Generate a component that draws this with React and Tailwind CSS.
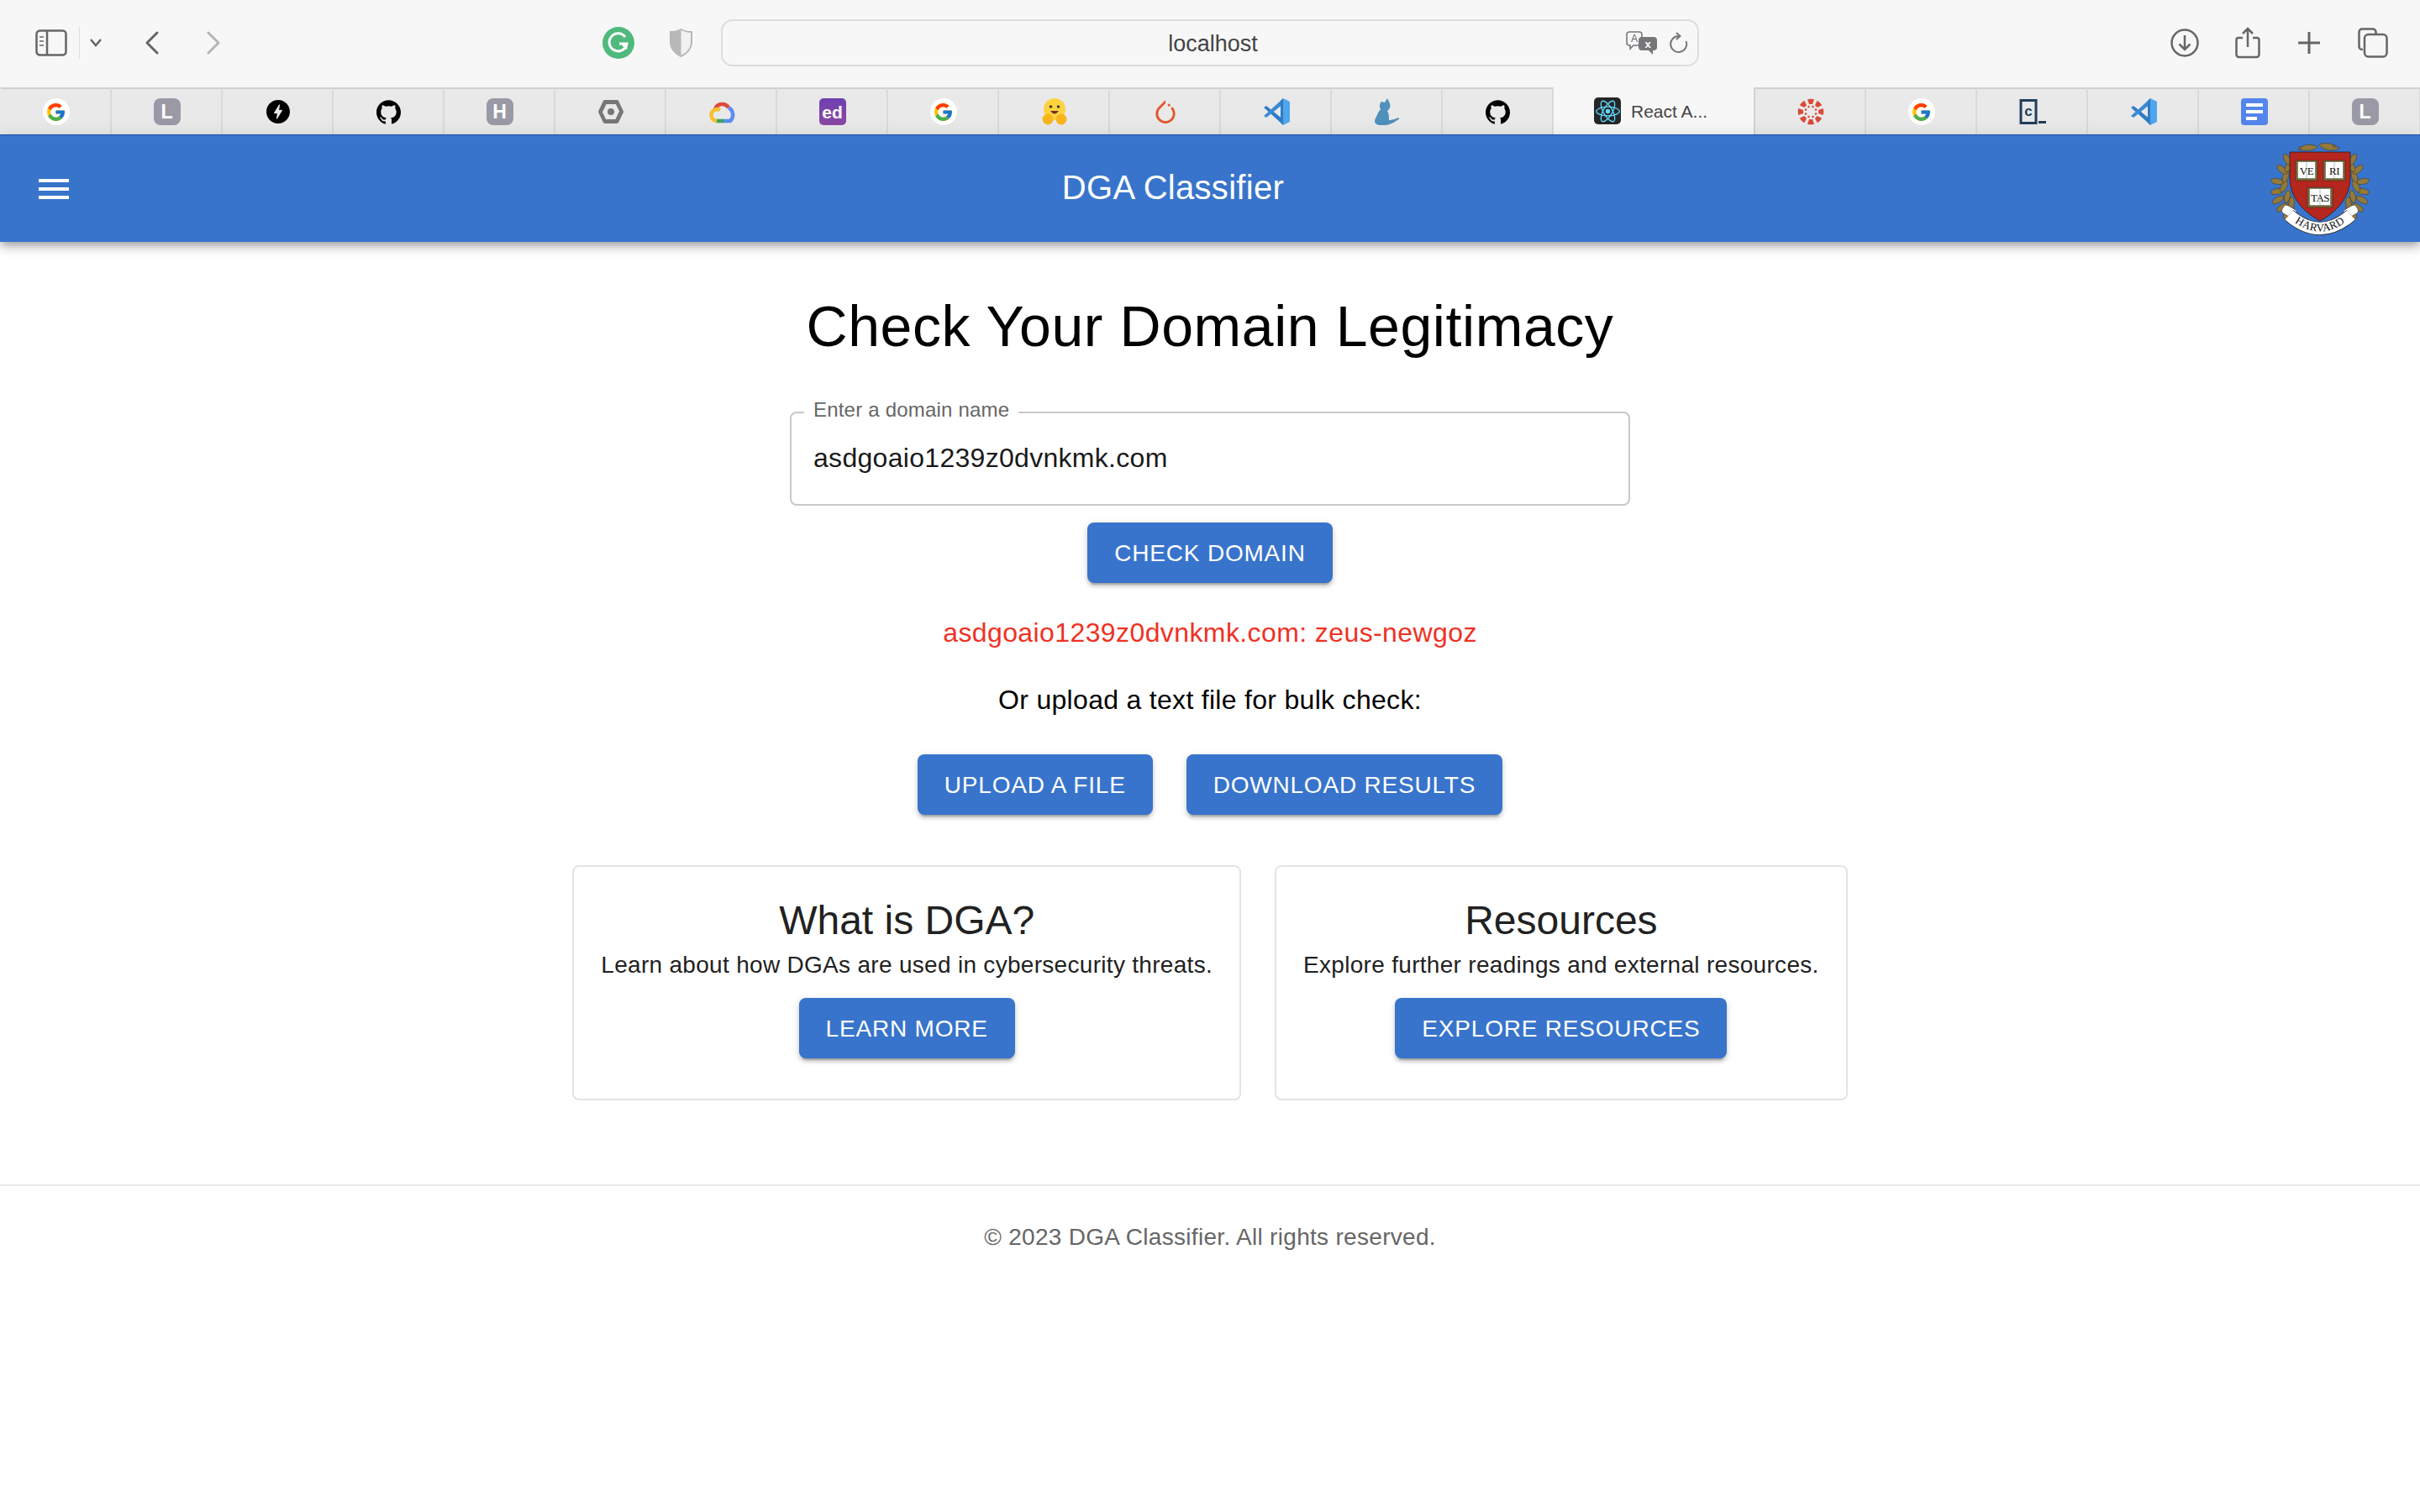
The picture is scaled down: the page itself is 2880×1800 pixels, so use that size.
import { FcGoogle } from 'react-icons/fc';
import { SiGithub, SiAmp, SiPytorch, SiReact } from 'react-icons/si';

const Tile = ({ children }) => (
  <div className="w-8 h-8 rounded-[8px] bg-[#9a9aa6] flex items-center justify-center text-white text-[23px] font-bold leading-none">
    {children}
  </div>
);

const GoogleIcon = () => (
  <div className="w-8 h-8 rounded-full bg-white flex items-center justify-center">
    <FcGoogle size={25} />
  </div>
);

const HexIcon = () => (
  <svg width="30" height="28" viewBox="0 0 30 28">
    <path d="M8 2.5 H22 L27.5 14 L22 25.5 H8 L2.5 14 Z" fill="none" stroke="#777" strokeWidth="5" strokeLinejoin="round" />
    <circle cx="15" cy="14" r="4" fill="#777" />
    <path d="M20 5 L24.5 14 M10 23 L5.5 14" stroke="#e9e9e9" strokeWidth="1.5" />
  </svg>
);

const CloudIcon = () => (
  <svg width="32" height="28" viewBox="0 0 32 28">
    <path d="M8 11 A9 9 0 0 1 24 9" fill="none" stroke="#e0483a" strokeWidth="4.5" />
    <path d="M24 9 A10 10 0 0 1 26 25 H16" fill="none" stroke="#5c8def" strokeWidth="4.5" />
    <path d="M9 25 H18" fill="none" stroke="#3fa45b" strokeWidth="4.5" />
    <path d="M10 25 A7 7 0 1 1 14 12" fill="none" stroke="#f6bf2e" strokeWidth="4.5" />
  </svg>
);

const EdIcon = () => (
  <div className="w-8 h-8 rounded-[5px] bg-gradient-to-b from-[#6f3fb0] to-[#8a48a4] flex items-center justify-center text-white text-[21px] font-bold leading-none">
    ed
  </div>
);

const HuggingIcon = () => (
  <svg width="30" height="32" viewBox="0 0 30 32">
    <circle cx="15" cy="13" r="13" fill="#fcd33f" />
    <circle cx="10.5" cy="10" r="1.8" fill="#3a3a3a" />
    <circle cx="19.5" cy="10" r="1.8" fill="#3a3a3a" />
    <path d="M10 15 Q15 22 20 15 Z" fill="#7a2a2a" />
    <ellipse cx="7" cy="25" rx="6.5" ry="6.5" fill="#f9b51e" />
    <ellipse cx="23" cy="25" rx="6.5" ry="6.5" fill="#f9b51e" />
  </svg>
);

const VsCodeIcon = () => (
  <svg width="32" height="32" viewBox="0 0 32 32">
    <path d="M1 11 L4 9 L24 25 L21 29 Z" fill="#2f7cc4" />
    <path d="M1 21 L4 23 L24 7 L21 3 Z" fill="#3a8ad4" />
    <path d="M21 3 L24 0 L32 4 V28 L24 32 L21 29 V3 Z" fill="#4fa6ec" />
    <path d="M24 0 L24 32 L21 29 L21 3 Z" fill="#2f7cc4" />
  </svg>
);

const CatIcon = () => (
  <svg width="32" height="32" viewBox="0 0 32 32">
    <path
      d="M9 4 L13 5 L16 0 L19 6 C20 10 19 13 16 15 C18 18 18 23 18 26 C22 26 26 24 30 23 L30 25 C26 27 22 31 14 32 C8 33 2 32 1 28 C1 24 3 22 4 20 C5 16 7 15 8 13 C6 10 7 6 9 4 Z"
      fill="#4f90bc"
    />
  </svg>
);

const CanvasIcon = () => {
  const angles = [0, 45, 90, 135, 180, 225, 270, 315];
  return (
    <svg width="32" height="32" viewBox="0 0 32 32">
      {angles.map(a => (
        <g key={a} transform={`rotate(${a} 16 16)`}>
          <path d="M12 1.2 A15 15 0 0 1 20 1.2 L18 7 H14 Z" fill="#d94a38" />
          <circle cx="16" cy="9.5" r="1.3" fill="#d94a38" transform="rotate(22.5 16 16)" />
        </g>
      ))}
    </svg>
  );
};

const TerminalIcon = () => (
  <svg width="32" height="32" viewBox="0 0 32 32">
    <rect x="2" y="2.5" width="18" height="27" fill="#e4e8ea" stroke="#243d58" strokeWidth="3" />
    <text x="11" y="21" textAnchor="middle" fontFamily="'Liberation Mono', monospace" fontWeight="700" fontSize="17" fill="#243d58">c</text>
    <rect x="23" y="27" width="9" height="3" fill="#243d58" />
  </svg>
);

const DocsIcon = () => (
  <div className="w-8 h-8 rounded-[4px] bg-[#5485ec] flex flex-col justify-center gap-[4px] px-[6px]">
    <div className="h-[4px] bg-white" />
    <div className="h-[4px] bg-white" />
    <div className="h-[4px] w-[13px] bg-white" />
  </div>
);

const leftTabs = [
  <GoogleIcon />,
  <Tile>L</Tile>,
  <SiAmp size={28} color="#000" />,
  <SiGithub size={29} color="#000" />,
  <Tile>H</Tile>,
  <HexIcon />,
  <CloudIcon />,
  <EdIcon />,
  <GoogleIcon />,
  <HuggingIcon />,
  <SiPytorch size={28} color="#e4572e" />,
  <VsCodeIcon />,
  <CatIcon />,
  <SiGithub size={29} color="#000" />,
];

const rightTabs = [
  <CanvasIcon />,
  <GoogleIcon />,
  <TerminalIcon />,
  <VsCodeIcon />,
  <DocsIcon />,
  <Tile>L</Tile>,
];

const Tab = ({ children }) => (
  <div className="w-[132px] h-[56px] shrink-0 pl-[1px] border-t-2 border-t-[#cfcfcf] border-r-2 border-r-[#dadada] flex items-center justify-center">
    {children}
  </div>
);

const Toolbar = () => (
  <div className="h-[104px] bg-[#f7f7f7] flex items-center pl-[42px] pb-[2px]">
    <svg width="38" height="32" viewBox="0 0 38 32" fill="none" stroke="#666" strokeWidth="2.5">
      <rect x="1.5" y="1.5" width="35" height="29" rx="4" />
      <path d="M14 1.5 V30.5" />
      <path d="M5 9 H10 M5 14 H10 M5 19 H10" strokeWidth="2" stroke="#888" />
    </svg>
    <div className="w-px h-[38px] bg-[#dedede] ml-[14px]" />
    <svg className="ml-[12px]" width="14" height="10" viewBox="0 0 14 10" fill="none" stroke="#666" strokeWidth="2.5">
      <path d="M1 1 L7 8 L13 1" />
    </svg>
    <svg className="ml-[51px]" width="18" height="28" viewBox="0 0 18 28" fill="none" stroke="#666" strokeWidth="3" strokeLinecap="round" strokeLinejoin="round">
      <path d="M15 2 L3 14 L15 26" />
    </svg>
    <svg className="ml-[55px]" width="18" height="28" viewBox="0 0 18 28" fill="none" stroke="#b5b5b5" strokeWidth="3" strokeLinecap="round" strokeLinejoin="round">
      <path d="M3 2 L15 14 L3 26" />
    </svg>
    <svg className="ml-[454px]" width="38" height="38" viewBox="0 0 38 38">
      <circle cx="19" cy="19" r="19" fill="#50b97c" />
      <path d="M27 12 A10.5 10.5 0 1 0 29 20 H20" fill="none" stroke="#fff" strokeWidth="3" />
      <path d="M23.5 20 L29 26" stroke="#fff" strokeWidth="3" />
    </svg>
    <svg className="ml-[42px]" width="27" height="34" viewBox="0 0 27 34">
      <path d="M13.5 1 C17 3 22 4 26 4 V16 C26 24 20 30 13.5 33 C7 30 1 24 1 16 V4 C5 4 10 3 13.5 1 Z" fill="#f2f2f2" stroke="#b8b8b8" strokeWidth="2" />
      <path d="M13.5 1 C10 3 5 4 1 4 V16 C1 24 7 30 13.5 33 Z" fill="#b8b8b8" />
    </svg>
    <div className="ml-[34px] w-[1164px] h-[56px] rounded-[14px] border-2 border-[#dddddd] flex items-center pl-[92px] pr-[11px]">
      <div className="flex-1 mt-[2px] text-center text-[27px] text-[#444] leading-none">localhost</div>
      <svg width="38" height="28" viewBox="0 0 38 28">
        <path d="M4 1 H16 A3 3 0 0 1 19 4 V14 A3 3 0 0 1 16 17 H9 L5 21 V17 H4 A3 3 0 0 1 1 14 V4 A3 3 0 0 1 4 1 Z" fill="#f7f7f7" stroke="#777" strokeWidth="1.6" />
        <text x="10" y="13" textAnchor="middle" fontSize="12" fill="#666" fontFamily="'Liberation Sans', sans-serif">A</text>
        <path d="M19 7 H33 A4 4 0 0 1 37 11 V19 A4 4 0 0 1 33 23 H32 V28 L27 23 H19 A4 4 0 0 1 15 19 V11 A4 4 0 0 1 19 7 Z" fill="#777" />
        <text x="26" y="20" textAnchor="middle" fontSize="13" fontWeight="700" fill="#fff" fontFamily="'Liberation Sans', sans-serif">x</text>
      </svg>
      <svg className="ml-[14px]" width="22" height="26" viewBox="0 0 22 26" fill="none" stroke="#777" strokeWidth="2">
        <path d="M11 5 A9.5 9.5 0 1 0 19.5 11" />
        <path d="M8 1 L12.5 5 L8 9" />
      </svg>
    </div>
    <svg className="ml-[561px]" width="34" height="34" viewBox="0 0 34 34" fill="none" stroke="#666" strokeWidth="2.5">
      <circle cx="17" cy="17" r="15.5" />
      <path d="M17 8 V25 M10.5 18.5 L17 25 L23.5 18.5" />
    </svg>
    <svg className="ml-[43px]" width="30" height="38" viewBox="0 0 30 38" fill="none" stroke="#666" strokeWidth="2.5">
      <path d="M9 13 H4 A2.5 2.5 0 0 0 1.5 15.5 V33 A3 3 0 0 0 4.5 36 H25.5 A3 3 0 0 0 28.5 33 V15.5 A2.5 2.5 0 0 0 26 13 H21" />
      <path d="M15 24 V2 M9 8 L15 2 L21 8" />
    </svg>
    <svg className="ml-[44px]" width="28" height="28" viewBox="0 0 28 28" fill="none" stroke="#666" strokeWidth="3">
      <path d="M14 1 V27 M1 14 H27" />
    </svg>
    <svg className="ml-[44px]" width="36" height="36" viewBox="0 0 36 36" fill="none" stroke="#666" strokeWidth="2.5">
      <path d="M6 26 H5 A3.5 3.5 0 0 1 1.5 22.5 V5 A3.5 3.5 0 0 1 5 1.5 H18 A3.5 3.5 0 0 1 21.5 5 V8" />
      <rect x="8" y="8" width="26.5" height="26.5" rx="4.5" />
    </svg>
  </div>
);

const TabStrip = () => (
  <div className="flex overflow-hidden h-[56px] pl-[1px] bg-[#e9e9e9]">
    {leftTabs.map((icon, i) => <Tab key={i}>{icon}</Tab>)}
    <div className="w-[240px] h-[56px] shrink-0 bg-[#f7f7f7] flex items-center pl-[48px] border-r-2 border-r-[#d2d2d2]">
      <div className="w-8 h-8 rounded-[5px] bg-[#23272a] flex items-center justify-center">
        <SiReact size={29} color="#61dafb" />
      </div>
      <span className="ml-[12px] text-[21px] text-[#444] leading-none">React A...</span>
    </div>
    {rightTabs.map((icon, i) => <Tab key={i}>{icon}</Tab>)}
  </div>
);

const leafAngles = [
  [62, 104, 30], [56, 97, 55], [67, 92, 5], [51, 88, 60], [62, 84, 15], [50, 78, 80],
  [58, 72, 30], [50, 66, 100], [60, 60, 20], [56, 52, 130], [64, 48, 30], [62, 40, 150],
];

const HarvardLogo = () => (
  <svg width="120" height="116" viewBox="40 17 120 116">
    {leafAngles.map(([x, y, r], i) => (
      <g key={i} fill="#93793c" stroke="#3d3214" strokeWidth="0.5">
        <ellipse cx={x} cy={y} rx="3.4" ry="7.5" transform={`rotate(${r} ${x} ${y})`} />
        <ellipse cx={202 - x} cy={y} rx="3.4" ry="7.5" transform={`rotate(${-r} ${202 - x} ${y})`} />
      </g>
    ))}
    <g fill="#93793c" stroke="#3d3214" strokeWidth="0.5">
      <path d="M76 28 C80 22 90 20 98 25 C92 30 84 30 76 28 Z" />
      <path d="M100 22 C106 19 116 20 124 27 C116 30 104 30 100 22 Z" />
      <circle cx="118" cy="24" r="1.6" />
      <circle cx="77" cy="26" r="1.6" />
    </g>
    <path d="M65 31 H137 V62 C137 85 120 103 101 113 C82 103 65 85 65 62 Z" fill="#b5261e" stroke="#222" strokeWidth="0.8" />
    {[[72, 41, 26, 'VE'], [105, 41, 26, 'RI'], [86, 73, 30, 'TAS']].map(([x, y, w, label]) => (
      <g key={label}>
        <rect x={x} y={y} width={w} height="24" fill="#7a6a35" stroke="#2b2410" strokeWidth="0.5" />
        <rect x={x + 2.5} y={y + 1.5} width={w - 5} height="20" fill="#fff" stroke="#555" strokeWidth="0.5" />
        <path d={`M${x + w / 2} ${y + 1.5} V${y + 21.5}`} stroke="#777" strokeWidth="0.5" />
        <text x={x + w / 2} y={y + 16.5} textAnchor="middle" fontSize="13" letterSpacing="-0.5" fill="#111" fontFamily="'Liberation Serif', serif">{label}</text>
      </g>
    ))}
    <rect x="56" y="96" width="17" height="11" rx="4" fill="#fff" stroke="#333" strokeWidth="0.6" transform="rotate(30 64 101)" />
    <rect x="129" y="96" width="17" height="11" rx="4" fill="#fff" stroke="#333" strokeWidth="0.6" transform="rotate(-30 138 101)" />
    <path d="M64 106 Q101 138 138 106" fill="none" stroke="#222" strokeWidth="16" />
    <path d="M64 106 Q101 138 138 106" fill="none" stroke="#fff" strokeWidth="14.5" />
    <path id="ribbon-text" d="M66 111 Q101 140 136 111" fill="none" />
    <text fontSize="13" fill="#111" fontFamily="'Liberation Serif', serif" letterSpacing="0.5">
      <textPath href="#ribbon-text" startOffset="50%" textAnchor="middle">HARVARD</textPath>
    </text>
  </svg>
);

const Header = () => (
  <header className="relative h-[128px] bg-[#3874cb] border-t border-t-[#1a4fa8] flex items-center shadow-[0_4px_8px_-2px_rgba(0,0,0,0.2),0_8px_10px_0_rgba(0,0,0,0.14),0_2px_20px_0_rgba(0,0,0,0.12)]">
    <div className="w-[92px] pl-[46px] shrink-0 flex flex-col gap-[6px]">
      <div className="w-[36px] h-[4px] bg-white" />
      <div className="w-[36px] h-[4px] bg-white" />
      <div className="w-[36px] h-[4px] bg-white" />
    </div>
    <div className="flex-1 pb-[3px] text-center text-white text-[40px] leading-[1.6] tracking-[0.3px]">DGA Classifier</div>
    <div className="pr-[60px] shrink-0 flex">
      <HarvardLogo />
    </div>
  </header>
);

const ActionButton = ({ children }) => (
  <button className="h-[72px] px-[32px] rounded-[8px] bg-[#3874cb] text-white text-[28px] leading-[49px] tracking-[0.8px] uppercase shadow-[0_6px_2px_-4px_rgba(0,0,0,0.2),0_4px_4px_0_rgba(0,0,0,0.14),0_2px_10px_0_rgba(0,0,0,0.12)]">
    {children}
  </button>
);

const InfoCard = ({ title, text, action }) => (
  <div className="border-2 border-[#e4e4e4] rounded-[8px] px-[32px] pt-[32px] pb-[48px] flex flex-col items-center">
    <h2 className="text-[48px] leading-[64px] text-[#212121]">{title}</h2>
    <p className="mt-[1px] text-[28px] leading-[40px] tracking-[0.3px] text-[#212121]">{text}</p>
    <div className="mt-[19px] flex">
      <ActionButton>{action}</ActionButton>
    </div>
  </div>
);

export default function App() {
  return (
    <div className="min-h-[1800px] bg-white font-['Liberation_Sans',Arial,sans-serif]">
      <Toolbar />
      <TabStrip />
      <Header />
      <main className="flex flex-col items-center pt-[58px]">
        <h1 className="text-[68px] leading-[84px] text-black tracking-[0.57px]">Check Your Domain Legitimacy</h1>
        <div className="relative mt-[60px] w-[1000px] h-[112px] border-2 border-[#c8c8c8] rounded-[8px] flex items-center pl-[26px] pb-[3px]">
          <span className="absolute left-[15px] -top-[18px] bg-white px-[11px] text-[24px] leading-[28px] tracking-[0.2px] text-[#666]">Enter a domain name</span>
          <span className="text-[32px] text-[#1a1a1a] tracking-[0.3px]">asdgoaio1239z0dvnkmk.com</span>
        </div>
        <div className="mt-[20px] flex">
          <ActionButton>Check Domain</ActionButton>
        </div>
        <p className="mt-[35px] text-[32px] leading-[48px] tracking-[0.4px] text-[#ef3124]">asdgoaio1239z0dvnkmk.com: zeus-newgoz</p>
        <p className="mt-[32px] text-[32px] leading-[48px] tracking-[0.3px] text-black">Or upload a text file for bulk check:</p>
        <div className="mt-[41px] flex gap-[40px]">
          <ActionButton>Upload a File</ActionButton>
          <ActionButton>Download Results</ActionButton>
        </div>
        <div className="mt-[60px] flex gap-[40px]">
          <InfoCard title="What is DGA?" text="Learn about how DGAs are used in cybersecurity threats." action="Learn More" />
          <InfoCard title="Resources" text="Explore further readings and external resources." action="Explore Resources" />
        </div>
      </main>
      <footer className="mt-[100px] border-t-2 border-t-[#e8e8e8] pt-[41px] text-center text-[28px] leading-[40px] tracking-[0.3px] text-[#666]">
        © 2023 DGA Classifier. All rights reserved.
      </footer>
    </div>
  );
}
